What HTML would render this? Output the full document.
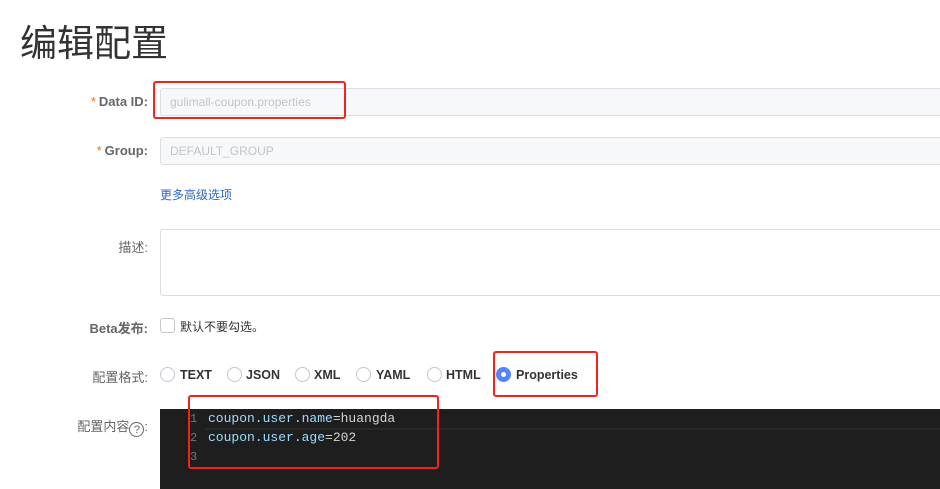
<!DOCTYPE html>
<html><head><meta charset="utf-8"><style>
body{margin:0;width:940px;height:489px;overflow:hidden;background:#fff;font-family:"Liberation Sans","Noto Sans CJK SC",sans-serif;position:relative}
.a{position:absolute}
.lbl{position:absolute;right:792px;font-size:13px;color:#666;white-space:nowrap}
.lbl b{color:#e8731e;font-weight:normal;margin-right:3px}
.inp{position:absolute;left:160px;width:800px;border:1px solid #dcdee3;border-radius:3px;background:#f7f8fa;box-sizing:border-box;font-size:12px;color:#c0c4cc;padding-left:9px}
.red{position:absolute;border:2px solid #f5221b;border-radius:3px;box-sizing:border-box}
.r{position:absolute;top:367px;width:15px;height:15px;border:1px solid #c4c6cf;border-radius:50%;box-sizing:border-box;background:#fff}
.rt{position:absolute;top:368px;font-size:12.5px;font-weight:bold;color:#333}
.code{font-family:"Liberation Mono","DejaVu Sans Mono",monospace;font-size:13px;color:#9cdcfe;position:absolute;left:208px}
.ln{font-family:"Liberation Mono",monospace;font-size:12px;color:#6e7681;position:absolute;left:190px}
</style></head><body>
<div class="a" style="left:20px;top:13px;font-size:37px;color:#333">编辑配置</div>
<div class="lbl" style="top:94px"><b>*</b><span style="font-weight:bold">Data ID:</span></div>
<div class="inp" style="top:88px;height:28px;line-height:26px">gulimall-coupon.properties</div>
<div class="lbl" style="top:143px"><b>*</b><span style="font-weight:bold">Group:</span></div>
<div class="inp" style="top:137px;height:28px;line-height:26px">DEFAULT_GROUP</div>
<div class="a" style="left:160px;top:186px;font-size:12px;color:#2c68c8">更多高级选项</div>
<div class="lbl" style="top:237px">描述:</div>
<div class="inp" style="top:229px;height:67px;background:#fff"></div>
<div class="lbl" style="top:318px;font-weight:bold">Beta发布:</div>
<div class="a" style="left:160px;top:318px;width:15px;height:15px;border:1px solid #c4c6cf;border-radius:3px;box-sizing:border-box"></div>
<div class="a" style="left:180px;top:318px;font-size:12px;color:#333">默认不要勾选。</div>
<div class="lbl" style="top:367px">配置格式:</div>
<div class="r" style="left:160px"></div><div class="rt" style="left:180px">TEXT</div>
<div class="r" style="left:227px"></div><div class="rt" style="left:246px">JSON</div>
<div class="r" style="left:295px"></div><div class="rt" style="left:314px">XML</div>
<div class="r" style="left:356px"></div><div class="rt" style="left:376px">YAML</div>
<div class="r" style="left:427px"></div><div class="rt" style="left:446px">HTML</div>
<div class="r" style="left:496px;background:#5584ff;border-color:#5584ff"><div style="width:5px;height:5px;background:#fff;border-radius:50%;margin:4px"></div></div><div class="rt" style="left:516px">Properties</div>
<div class="lbl" style="top:416px">配置内容<span style="display:inline-block;width:15px;height:15px;border:1px solid #666;border-radius:50%;text-align:center;line-height:14px;font-size:11px;box-sizing:border-box;vertical-align:-2px">?</span>:</div>
<div class="a" style="left:160px;top:409px;width:780px;height:80px;background:#1e1e1e"></div>
<div class="a" style="left:205px;top:410px;width:735px;height:18px;border-bottom:2px solid #282828"></div>
<div class="ln" style="top:412px">1</div><div class="code" style="top:411px">coupon.user.name<span style="color:#d4d4d4">=huangda</span></div>
<div class="ln" style="top:431px">2</div><div class="code" style="top:430px">coupon.user.age<span style="color:#d4d4d4">=202</span></div>
<div class="ln" style="top:450px">3</div>
<div class="red" style="left:153px;top:81px;width:193px;height:38px"></div>
<div class="red" style="left:493px;top:351px;width:105px;height:46px"></div>
<div class="red" style="left:188px;top:395px;width:251px;height:74px"></div>
</body></html>
